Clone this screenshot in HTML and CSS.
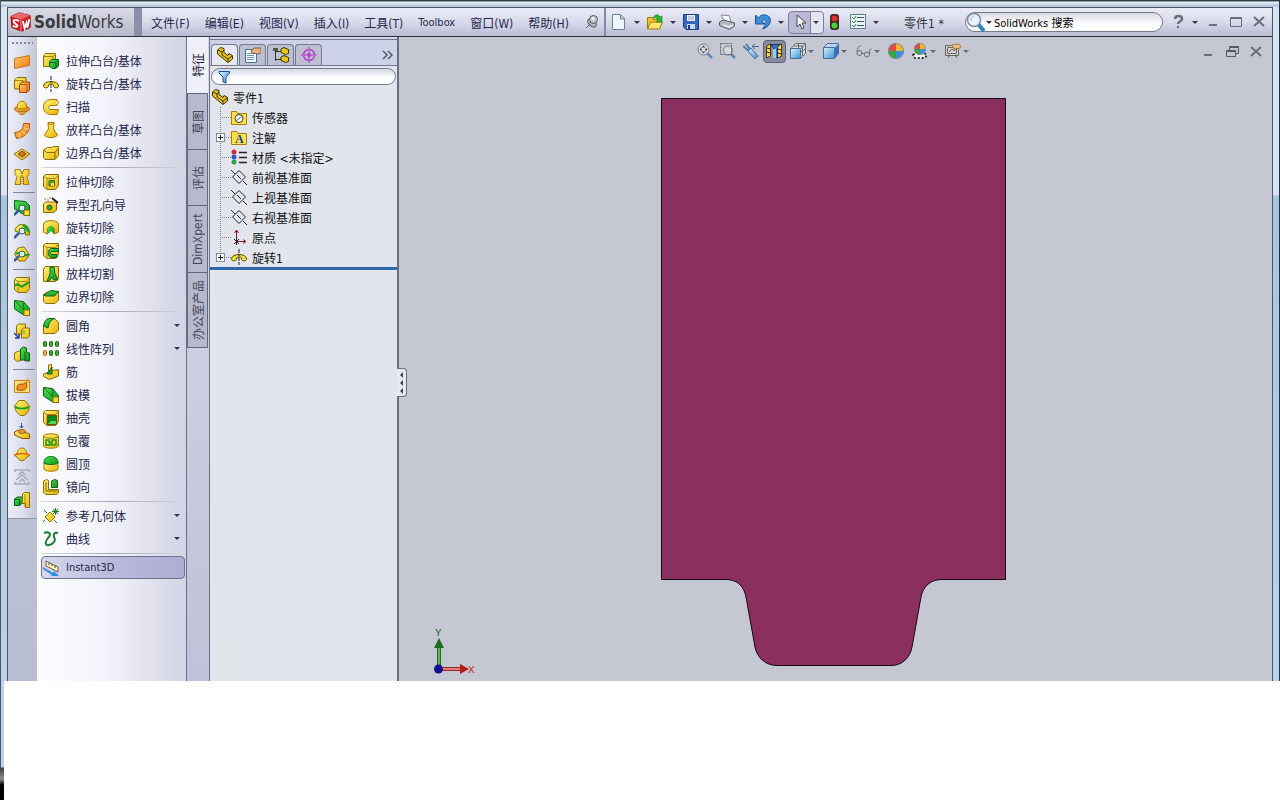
FILE: index.html
```html
<!DOCTYPE html>
<html lang="zh-CN">
<head>
    <meta charset="UTF-8">
    <meta name="viewport" content="width=device-width, initial-scale=1.0">
    <title>SolidWorks - 零件1</title>
    <link rel="stylesheet" href="styles.css">
</head>
<body>

<!-- icon set, 16 x 16 grid -->
<svg class="icon-set" aria-hidden="true">
    <linearGradient id="yel" x2="1" y2="1"><stop offset="0" stop-color="#fff27a"/><stop offset="1" stop-color="#e9b400"/></linearGradient>
    <linearGradient id="org" x2="1" y2="1"><stop offset="0" stop-color="#ffc870"/><stop offset="1" stop-color="#ef7a0c"/></linearGradient>
    <linearGradient id="grn" x2="1" y2="1"><stop offset="0" stop-color="#4be04b"/><stop offset="1" stop-color="#0c9420"/></linearGradient>
    <linearGradient id="blu" x2="1" y2="1"><stop offset="0" stop-color="#d8f2ff"/><stop offset="1" stop-color="#3f8fd2"/></linearGradient>

    <symbol id="cube" viewBox="0 0 16 16"><path d="M.5 2.500 2.500.5H15.500v11L12.500 15.500H4L.5 12.500z" fill="url(#yel)" stroke="#8d6c08"/><path d="M1 2.500l3 2h8.500L15 1.500M4 4.500v10.500" fill="none" stroke="#a8840c"/></symbol>

    <symbol id="plane" viewBox="0 0 16 16"><path d="M.5 4.500 15.500 1.500v10L.5 14.500z" fill="url(#org)" stroke="#c8761c"/></symbol>
    <symbol id="thicken" viewBox="0 0 16 16"><path d="M.5 3 3 .5h9v9L9 12H.5z" fill="url(#yel)" stroke="#8d6c08"/><path d="M.5 3.500H9V11" fill="none" stroke="#a8840c"/><path d="M5.500 7.500 8 5h7.500v8L13 15.500H5.500z" fill="url(#org)" stroke="#a04c04"/><path d="M6 7.500h7V15M13 7.500l2-2" fill="none" stroke="#b86008"/></symbol>
    <symbol id="spin" viewBox="0 0 16 16"><ellipse cx="8" cy="9" rx="7.500" ry="3" fill="url(#org)" stroke="#a8600a"/><path d="M3 8c0-9 10-9 10 0-2 1.500-8 1.500-10 0z" fill="url(#yel)" stroke="#a8780a"/><path d="M4 11c1 5 7 5 8 0-2 1-6 1-8 0z" fill="url(#org)" stroke="#a8780a"/></symbol>
    <symbol id="sweep-s" viewBox="0 0 16 16"><path d="M9.500.5h6c1 8-4 14-13 15l-2-6c5 0 9-3 9-9z" fill="url(#org)" stroke="#b05808"/><path d="M10 5l5 1M8 8l5 4M5 10l1 5" stroke="#ffe080"/></symbol>
    <symbol id="loft-s" viewBox="0 0 16 16"><path d="M0 8 8 3l8 5-8 6z" fill="url(#yel)" stroke="#8d6c08"/><path d="M4 8 8 5l4 3-4 3z" fill="#d9760a" stroke="#7d4404"/></symbol>
    <symbol id="zip" viewBox="0 0 16 16"><path d="M1 .5h5l2 4 2-4h5v5l-2 2 2 8H9.500V8h-3v7.500H1l2-8-2-2z" fill="url(#yel)" stroke="#a87808"/><path d="M8 4v12" stroke="#9a5c04" stroke-dasharray="1 1"/></symbol>
    <symbol id="mag" viewBox="0 0 16 16"><path d="M0 15l5-5" stroke="#355f9a" stroke-width="2.500"/><circle cx="8" cy="8" r="3" fill="#d5f3f0" stroke="#3c5c66"/></symbol>
    <symbol id="draft-an" viewBox="0 0 16 16"><path d="M.5.5l11 1 4 4v10h-4L.5 9z" fill="url(#grn)" stroke="#0a6018"/><path d="M10 10h5.500v5.500H10z" fill="#ffe340" stroke="#8d6c08"/><use href="#mag"/></symbol>
    <symbol id="under-an" viewBox="0 0 16 16"><path d="M1 8c1-9 14-9 14.500 1v3h-4V9c-2-3-4-2-5 1z" fill="url(#yel)" stroke="#6c7404"/><path d="M8 2c5-1 8 4 7.500 8l-3-2z" fill="#19a326"/><use href="#mag"/></symbol>
    <symbol id="thick-an" viewBox="0 0 16 16"><path d="M4 2l6-1 3 4 2.500 4-4.500 6H5L.5 8z" fill="url(#yel)" stroke="#8d6c08"/><path d="M2 8c3-4 7 5 13 0" stroke="#18a32a" stroke-width="2" fill="none"/><use href="#mag"/></symbol>
    <symbol id="split" viewBox="0 0 16 16"><use href="#cube"/><path d="M1 9c4-5 5 3 8 0 2-2 3-1 6-4" fill="none" stroke="#119a21" stroke-width="2"/></symbol>
    <symbol id="draft" viewBox="0 0 16 16"><path d="M.5.5l9 1 6 7v7h-5L.5 9z" fill="url(#grn)" stroke="#0a6018"/><path d="M1 1l9 9M9 2l1 8" stroke="#0a7818" fill="none"/><path d="M10 10h5.500v5.500H10z" fill="#ffdc30" stroke="#8d6c08"/></symbol>
    <symbol id="movecopy" viewBox="0 0 16 16"><path d="M2.500 3l2-2h7v8l-2 2h-7z" fill="url(#yel)" stroke="#8d6c08"/><path d="M7.500 7l2-2h6v8l-2 2h-6z" fill="url(#yel)" stroke="#8d6c08"/><path d="M8 7h3v4H8z" fill="#a6c626"/><path d="M0 10l5 5M5 11v4H1" fill="none" stroke="#203c9c" stroke-width="1.500"/></symbol>
    <symbol id="combine" viewBox="0 0 16 16"><path d="M.5 7l4-2 3 1v8l-4 1.500-3-2z" fill="url(#yel)" stroke="#8d6c08"/><path d="M6.500 3l3-2 3 1v4l3 1v8h-4v-1h-5z" fill="url(#grn)" stroke="#0a6018"/><path d="M11 6v9" stroke="#0a6018"/></symbol>
    <symbol id="freeform" viewBox="0 0 16 16"><path d="M.5 3.500h15v12H.5z" fill="#ffe07a" stroke="#c8841c"/><path d="M3 10c2-6 5 0 9-5l1 5c-3 5-6 3-10 3z" fill="#f08c20" stroke="#a85008"/><path d="M10 0l1 3 4-2-2 3 3 2h-4" fill="#f89a38"/></symbol>
    <symbol id="deform" viewBox="0 0 16 16"><path d="M5 .5h6l4.500 5.500-1 5-4 4.500H6L2 11 .5 6z" fill="url(#yel)" stroke="#8d7408"/><path d="M1 7c4 2 10 2 14 0" stroke="#18a32a" stroke-width="2" fill="none"/></symbol>
    <symbol id="indent" viewBox="0 0 16 16"><path d="M7.500 0v5M5.500 3l2 2 2-2" stroke="#2444b0" fill="none"/><path d="M.5 9l4-2 11 4v4.500H8L.5 12z" fill="url(#yel)" stroke="#8d5408"/><ellipse cx="8" cy="8.500" rx="3.500" ry="2" fill="#f19a2c" stroke="#9c5808"/></symbol>
    <symbol id="flex" viewBox="0 0 16 16"><path d="M3 8c1-8 9-8 10 0l3 1-3 2c-3 5-7 5-10 0L0 9z" fill="url(#yel)" stroke="#a0680a"/><path d="M0 9c5-2 11-2 16 0" fill="none" stroke="#e46808" stroke-width="1.500"/></symbol>
    <symbol id="wrap-off" viewBox="0 0 16 16"><path d="M1 3V1h14v2M1 13v2h14v-2M2 11l6-5 6 5M4 6l4-3 4 3M5 13l3-3 3 3" fill="none" stroke="#a7aab4" stroke-width="1.500"/></symbol>
    <symbol id="body" viewBox="0 0 16 16"><path d="M.5 7l3-2h5v6l-3 2.500h-5z" fill="url(#grn)" stroke="#0a6018"/><path d="M1 7.500h4.500V13" fill="none" stroke="#0a6018"/><path d="M8.500 2l2-1.500h5v15h-4v-4h-3z" fill="url(#yel)" stroke="#8d6c08"/><path d="M11 2v13" stroke="#a8840c"/></symbol>

    <symbol id="extrude" viewBox="0 0 16 16"><path d="M.5 3l2-2.500h10v11L10 13.500H.5z" fill="url(#yel)" stroke="#8d6c08"/><path d="M.5 3.500H10V13M10 3.500l2-2" fill="none" stroke="#a8840c"/><path d="M6.500 9l2-2.500h7V13L13 15.500H9L6.500 13z" fill="url(#grn)" stroke="#0a6018"/><path d="M7 9.500h6V15M13 9.500l2-2" fill="none" stroke="#0a6018"/></symbol>
    <symbol id="revolve" viewBox="0 0 16 16"><path d="M.5 10c0-6 15-6 15 0 0 2.500-5 2.500-5 0 0-2-1-2-2-2h-1c-1 0-2 0-2 2 0 2.500-5 2.500-5 0z" fill="#f3dc3a" stroke="#5c5004"/><path d="M8 0v4M8 5v2M8 8v4M8 13v3" stroke="#222"/></symbol>
    <symbol id="sweep" viewBox="0 0 16 16"><path d="M14 .5H8c-10 0-10 15 0 15h6l1.500-5H8c-3 0-3-4 0-4h6z" fill="url(#yel)" stroke="#a87808"/><path d="M13 1c3 0 3 5 0 5" fill="#fff0a0" stroke="#a87808"/></symbol>
    <symbol id="loft" viewBox="0 0 16 16"><path d="M5 .5h6L10.500 7l4 6c-2 3.500-11 3.500-13 0l4-6z" fill="url(#yel)" stroke="#a87808"/><path d="M5 1c1 2 5 2 6 0" fill="none" stroke="#a87808"/></symbol>
    <symbol id="boundary" viewBox="0 0 16 16"><path d="M.5 5l4-2.500h4l2-1h5v9L12 14.500H2l-1.500-2z" fill="url(#yel)" stroke="#8d6c08"/><path d="M1 5.500l3 2h8l3-4M12 7v7" fill="none" stroke="#8d6c08"/></symbol>
    <symbol id="cut" viewBox="0 0 16 16"><use href="#cube"/><path d="M6 6.500h5.500V12H6z" fill="#35b52e" stroke="#715404"/><path d="M8 9h3v3H8z" fill="#f4e25a"/></symbol>
    <symbol id="hole" viewBox="0 0 16 16"><path d="M.5 7l2-2h11v8L11 15.500H.5z" fill="url(#yel)" stroke="#8d6c08"/><circle cx="6.500" cy="10.500" r="2.500" fill="#2ba92b" stroke="#584404"/><path d="M9 1l6 5" stroke="#222" stroke-width="2"/><path d="M2 1v2M5 2v2M7 0v2" stroke="#e07018"/></symbol>
    <symbol id="rev-cut" viewBox="0 0 16 16"><path d="M.5 4c1-4.500 14-4.500 15 0v8l-4 2V9c-1-3-6-3-7 0v5l-4-2z" fill="url(#yel)" stroke="#a87808"/><path d="M5 14V9c1-4 5-4 6 0v5L8 11z" fill="url(#grn)"/></symbol>
    <symbol id="swp-cut" viewBox="0 0 16 16"><use href="#cube"/><path d="M15.500 5.500H9c-5 0-5 9 0 9h5v-3H9c-2 0-2-3 0-3h6.500z" fill="url(#grn)" stroke="#0a6018"/></symbol>
    <symbol id="loft-cut" viewBox="0 0 16 16"><path d="M.5 3l2-2.500h13v12l-3 3H.5z" fill="url(#yel)" stroke="#8d6c08"/><path d="M7 1h4l1 7 3 6h-4l-2-3-3 4H4l3-7z" fill="url(#grn)" stroke="#0a6018"/></symbol>
    <symbol id="bnd-cut" viewBox="0 0 16 16"><path d="M.5 6l3-3h12v8L12 14.500H3l-2.500-2z" fill="url(#yel)" stroke="#8d6c08"/><path d="M.5 6c4-1 5-4.500 8-4.500l7 1-4 4.500H3z" fill="url(#grn)" stroke="#0a6018"/></symbol>
    <symbol id="fillet" viewBox="0 0 16 16"><path d="M.5 7l5-6.500h6l4 4V12L12 15.500H.5z" fill="url(#yel)" stroke="#8d6c08"/><path d="M.5 8c1-5 3-7.500 6-7.500h5C7 3 6 5 5 10z" fill="url(#grn)" stroke="#0a6018"/></symbol>
    <symbol id="pattern" viewBox="0 0 16 16"><g fill="#35b52e" stroke="#245c10"><rect x=".5" y=".5" width="3" height="5" rx="1"/><rect x="6.500" y=".5" width="3" height="5" rx="1"/><rect x="12.500" y=".5" width="3" height="5" rx="1"/><rect x="6.500" y="9.500" width="3" height="5" rx="1"/><rect x="12.500" y="9.500" width="3" height="5" rx="1"/></g><rect x=".5" y="9.500" width="3" height="5" rx="1" fill="#ffb850" stroke="#a05808"/></symbol>
    <symbol id="rib" viewBox="0 0 16 16"><path d="M.5 10l5-2V1l3-.5v6l7-1V12l-9 3.500-6-3z" fill="url(#yel)" stroke="#8d6c08"/><path d="M4 10l5-7v7z" fill="url(#grn)" stroke="#0a6018"/></symbol>
    <symbol id="shell" viewBox="0 0 16 16"><use href="#cube"/><path d="M4.500 5.500h9v9h-9z" fill="#098a1c" stroke="#665004"/><path d="M5 14l3-3h5v3z" fill="#57d84f"/></symbol>
    <symbol id="wrap" viewBox="0 0 16 16"><path d="M.5 3c1-3 14-3 15 0v10c-1 3-14 3-15 0z" fill="url(#yel)" stroke="#a87808"/><path d="M.5 3c1 3 14 3 15 0" fill="none" stroke="#a87808"/><path d="M7 7H3v5h4V9H5M9 7h4v5H9z" fill="none" stroke="#139a22" stroke-width="1.500"/></symbol>
    <symbol id="dome" viewBox="0 0 16 16"><path d="M1 6v7c1 3 13 3 14 0V6z" fill="url(#yel)" stroke="#a87808"/><path d="M1 7c0-9 14-9 14 0-2 2-12 2-14 0z" fill="url(#grn)" stroke="#0a7a18"/></symbol>
    <symbol id="mirror" viewBox="0 0 16 16"><path d="M.5 2l3-1.500 2 1v9h10v3l-2 2H3l-2.500-2z" fill="url(#yel)" stroke="#8d6c08"/><path d="M8.500 2l3-1.500 3 1v7h-6z" fill="url(#grn)" stroke="#0a6018"/><path d="M3 3v9h11M11 3v5" fill="none" stroke="#6d6c08"/></symbol>
    <symbol id="refgeo" viewBox="0 0 16 16"><path d="M7 4l5 5-5 5-5-5z" fill="url(#yel)" stroke="#9c7c08"/><path d="M1 2l3 3M11 12l3 3M0 14l2-2M12.500 0v7M9 3.500h7M10 1l5 5M15 1l-5 5" stroke="#1c8424" fill="none"/></symbol>
    <symbol id="curve" viewBox="0 0 16 16"><path d="M1 2c5-2 8 1 4 5-4 5-2 8 1 7 5-1 7-5 5-8-1-3 1-5 4-4" fill="none" stroke="#15803c" stroke-width="2"/></symbol>
    <symbol id="instant" viewBox="0 0 16 16"><path d="M3 1l12 6v5L3 6z" fill="#fff3b8" stroke="#6c6440"/><path d="M6 3v2M9 4v2M12 6v2" stroke="#444"/><path d="M0 7l10 6 1-2 5 5H8l1-1-9-6z" fill="#2f8fe4"/></symbol>

    <symbol id="pin" viewBox="0 0 16 16"><path d="M2 14l4-4" stroke="#666"/><ellipse cx="8" cy="9" rx="5" ry="3" transform="rotate(40 8 9)" fill="#b4b4bc" stroke="#555"/><circle cx="9.500" cy="5.500" r="4" fill="#c6c6d0" stroke="#555"/><circle cx="9" cy="4.500" r="1.500" fill="#fff"/></symbol>
    <symbol id="new" viewBox="0 0 16 16"><path d="M1.500.5h8l4 4v11h-12z" fill="#eef7fb" stroke="#6b8298"/><path d="M9.500 1v4h4" fill="#bfd5e4" stroke="#6b8298"/></symbol>
    <symbol id="open" viewBox="0 0 16 16"><path d="M.5 3.500h5l1 2h5v9H.5z" fill="#f2c32c" stroke="#a8780a"/><path d="M.5 15l3-7h12l-3 7z" fill="#ffe36a" stroke="#a8780a"/><path d="M6 4c2-4 6-4 7-1l2-1v6h-6l2-2c-1-2-3-3-5-2z" fill="#2eb62c" stroke="#117a14" stroke-width=".6"/></symbol>
    <symbol id="save" viewBox="0 0 16 16"><path d="M.5.5h15v15H3L.5 13z" fill="#3567c4" stroke="#1b3c8c"/><path d="M4 1h8v6H4z" fill="#f2f5fb"/><path d="M5 3h6M5 5h6" stroke="#8fa0c0"/><path d="M4 10h8v5H4z" fill="#cfd6e4"/><path d="M5 11h2v4H5z" fill="#1b3c8c"/></symbol>
    <symbol id="print" viewBox="0 0 16 16"><path d="M2 1l8 .5L12 8H6z" fill="#fff" stroke="#889"/><path d="M.5 8l4-2 11 3v3l-5 3.500-10-4z" fill="#b4b8c2" stroke="#555a66"/><path d="M4 11l6 2 4-2" fill="none" stroke="#eee" stroke-width="1.500"/></symbol>
    <symbol id="undo" viewBox="0 0 16 16"><path d="M.5 1v9H10L6.500 7c4-3 7 1 1 8C18 12 18 0 8 1 6 1 5 2 3.500 4z" fill="#3c8edc" stroke="#1a4f9c"/></symbol>
    <symbol id="arrow" viewBox="0 0 16 16"><path d="M4 1v12l3-3 2 5 2-1-2-5h4z" fill="#fff" stroke="#444"/></symbol>
    <symbol id="traffic" viewBox="0 0 16 16"><rect x="3" y="0" width="9" height="16" rx="3" fill="#3b2a20"/><circle cx="7.500" cy="4.500" r="3" fill="#e23030"/><circle cx="7.500" cy="11.500" r="3" fill="#3ed13a"/></symbol>
    <symbol id="options" viewBox="0 0 16 16"><path d="M.5.5h15v14H.5z" fill="#e9f4f4" stroke="#5b8080"/><path d="M7 3.500h7M7 7.500h7M7 11.500h7" stroke="#456"/><path d="M2 3l2 2 2-3M2 7l2 2 2-3M2 11l2 2 2-3" fill="none" stroke="#21933a"/></symbol>
    <symbol id="search" viewBox="0 0 20 20"><path d="M12 12l6 7" stroke="#2f87b4" stroke-width="4"/><circle cx="8" cy="8" r="6.500" fill="#eaf3fa" stroke="#7b8ea6" stroke-width="1.500"/><path d="M5 9c0-3 1-4 3-5" fill="none" stroke="#9fb4c8"/></symbol>
    <symbol id="help" viewBox="0 0 16 16"><path d="M5 5c0-4 7-4 7 0 0 3-4 2-4 5" fill="none" stroke="#6c6e7a" stroke-width="2.500"/><path d="M7 12h2v2H7z" fill="#6c6e7a"/></symbol>
    <symbol id="min" viewBox="0 0 16 16"><path d="M4 11h8" stroke="#6c6e7a" stroke-width="2"/></symbol>
    <symbol id="max" viewBox="0 0 16 16"><path d="M2.500 3.500h11v9h-11zM3 4.500h10" fill="none" stroke="#6c6e7a"/></symbol>
    <symbol id="close" viewBox="0 0 16 16"><path d="M3 3l10 9M13 3L3 12" stroke="#6c6e7a" stroke-width="2"/></symbol>
    <symbol id="restore" viewBox="0 0 16 16"><path d="M5.500 6V2.500h9v7H11M6 3.500h8M2.500 6.500h9v6h-9zM3 7.500h8" fill="none" stroke="#555a68"/></symbol>

    <symbol id="zfit" viewBox="0 0 16 16"><path d="M10 10l5 5" stroke="#5d88b4" stroke-width="2.500"/><circle cx="6.500" cy="6.500" r="5.500" fill="#d7dbe2" stroke="#777c88"/><path d="M6.500 2.500l2 2h-4zM6.500 10.500l2-2h-4zM2.500 6.500l2-2v4zM10.500 6.500l-2-2v4z" fill="#444"/></symbol>
    <symbol id="zarea" viewBox="0 0 16 16"><path d="M11 11l4 4" stroke="#5d88b4" stroke-width="2.500"/><circle cx="8" cy="7.500" r="4.500" fill="#d7dbe2" stroke="#777c88"/><path d="M.5.5h11v11H.5z" fill="none" stroke="#666" stroke-dasharray="2 1"/></symbol>
    <symbol id="prev" viewBox="0 0 16 16"><path d="M0 3l6 5M3 1l4 5" stroke="#467fb0" stroke-width="2"/><path d="M5 8l3-3 7 8-3 3z" fill="url(#blu)" stroke="#44719c"/><path d="M16 3.500H9M12 1L9 3.500 12 6" fill="none" stroke="#3c6ca0"/></symbol>
    <symbol id="section" viewBox="0 0 16 16"><path d="M.5 3l4-2v12l-4 2zM11.500 3l4-2v12l-4 2z" fill="#ffd83a" stroke="#443800"/><path d="M4.500 1.500h9l-2 3v10h-4V5z" fill="#3478cc" stroke="#14356c"/><path d="M7 6h3v9H7z" fill="#9cc8f4"/><path d="M1 5l3 1M1 9l3 1M12 6l3 1M12 10l3 1" stroke="#222"/></symbol>
    <symbol id="orient" viewBox="0 0 16 16"><path d="M.5 6l5-5.500h10v10l-5 5H.5z" fill="#d9dce4" stroke="#666"/><path d="M.5 5.500h10v10H.5z" fill="url(#blu)" stroke="#44719c"/><path d="M10.500 6l5-5M12.500 3v10M4 3h9M8.500 1v4M11 9l4-3" stroke="#666"/></symbol>
    <symbol id="display" viewBox="0 0 16 16"><path d="M.5 4.500l4-4h11v10l-4 5H.5z" fill="#b8d4f0" stroke="#4a6c98"/><path d="M.5 4.500h11v11H.5z" fill="url(#blu)" stroke="#4a6c98"/><path d="M11.500 5l4-4v10l-4 4z" fill="#3e72b8"/></symbol>
    <symbol id="glasses" viewBox="0 0 16 16"><circle cx="3.500" cy="10" r="2.500" fill="none" stroke="#666b78"/><circle cx="11" cy="11.500" r="2.500" fill="none" stroke="#666b78"/><path d="M1 9c0-4 2-6 4-6M6 10l3 1M13.500 11c0-3 0-5 2-5" fill="none" stroke="#666b78"/></symbol>
    <symbol id="ball" viewBox="0 0 16 16"><path d="M8 8V0a8 8 0 0 1 8 8z" fill="#e8b83a"/><path d="M8 8h8a8 8 0 0 1-8 8z" fill="#3f8ee0"/><path d="M8 8v8a8 8 0 0 1-8-8z" fill="#34a744"/><path d="M8 8H0a8 8 0 0 1 8-8z" fill="#dd4b4b"/><circle cx="8" cy="8" r="7.500" fill="none" stroke="#888"/></symbol>
    <symbol id="scene" viewBox="0 0 16 16"><path d="M1 12l3-2h8l3 2-2 3H3z" fill="#fff" stroke="#333" stroke-dasharray="2 2" stroke-width="2"/><use href="#ball" x="2" y="0" width="12" height="12"/></symbol>
    <symbol id="settings" viewBox="0 0 16 16"><path d="M.5 2.500h13v10H.5zM2.500 4.500h9v6h-9z" fill="#d6d2cc" stroke="#666"/><path d="M4 9l3-3 2 2 2-3" fill="none" stroke="#555"/><path d="M7 2l6-1 3 2-1 2-6 1z" fill="#f2c189" stroke="#a87840"/><path d="M5 12l-2 3M10 12l2 3" stroke="#555"/></symbol>

    <symbol id="part" viewBox="0 0 16 16"><path d="M.5 3l3-2.500 3.500 1v4l4 3 1-2 3.500 2V12L11 15.500.5 7z" fill="#e6c31e" stroke="#3c3204"/><path d="M1 3l4 2v3l6 4 4-3M5 5l2-2M11 12v3" fill="none" stroke="#3c3204"/></symbol>
    <symbol id="props" viewBox="0 0 16 16"><path d="M.5 2.500h11v13H.5z" fill="#f6fbff" stroke="#46729c"/><path d="M2 6.500h7M2 8.500h7M2 10.500h7M2 12.500h7" stroke="#6a9ccc"/><path d="M6 4l3-3h7v5l-4 1-5-1z" fill="#e2b283" stroke="#865c34"/></symbol>
    <symbol id="config" viewBox="0 0 16 16"><path d="M2.500 1v13M2 4.500h6M2 12.500h6" fill="none" stroke="#333"/><path d="M0 1h5v3H0z" fill="#555"/><path d="M8 2l3-1.500 4.500 2v4l-3 1L8 5.500zM8 10l3-1.500 4.500 2v4l-3 1-4.500-2z" fill="#e9c41c" stroke="#3c3204"/></symbol>
    <symbol id="target" viewBox="0 0 16 16"><circle cx="8" cy="8" r="5.500" fill="none" stroke="#b244c4" stroke-width="1.500"/><path d="M8 0v16M0 8h16" stroke="#c25cd0" stroke-width="1.500"/><circle cx="8" cy="8" r="2" fill="#b244c4"/></symbol>
    <symbol id="funnel" viewBox="0 0 16 16"><path d="M3 2.500h10.500V4L10 8v6l-3-1V8L3 4z" fill="url(#blu)" stroke="#174f9c"/></symbol>
    <symbol id="folder" viewBox="0 0 16 16"><path d="M.5 2.500h5l1 2h9v11H.5z" fill="#ffe14a" stroke="#a88008"/></symbol>
    <symbol id="sensor" viewBox="0 0 16 16"><use href="#folder"/><circle cx="8" cy="9.500" r="4" fill="#fff" stroke="#333"/><path d="M6 11.500l4-4" stroke="#246"/></symbol>
    <symbol id="material" viewBox="0 0 16 16"><circle cx="3" cy="3" r="2.500" fill="#d82a3c"/><circle cx="3" cy="8" r="2.500" fill="#3454c8"/><circle cx="3" cy="13" r="2.500" fill="#32a044"/><path d="M8 3.500h8M8 8.500h8M8 13.500h8" stroke="#222" stroke-width="1.500"/></symbol>
    <symbol id="datum" viewBox="0 0 16 16"><path d="M8 1.500l6.500 6.500L8 14.500 1.500 8zM0 1l4 4M6 6l4 4M12 12l4 4" fill="none" stroke="#222"/></symbol>
    <symbol id="origin" viewBox="0 0 16 16"><path d="M5.500 11V2M3.500 4l2-3 2 3M5 12.500h9M12 10.500l3 2-3 2" fill="none" stroke="#8a1828"/><path d="M3 10l5 5M8 10l-5 5M5.500 9v7" stroke="#222"/></symbol>
    <symbol id="logo" viewBox="0 0 24 22"><path d="M1 5L10 1l12 3v13l-9 4L2 17z" fill="#d41c24" stroke="#8c1014"/><path d="M1 5l11 3 10-4L10 1z" fill="#f0696a"/><path d="M12 8v13" stroke="#f79a9a"/><path d="M10 10c-6-3-8 0-4 3 4 2 2 5-3 2M14 10l2 8 2-6 1 5 2-9" fill="none" stroke="#fff" stroke-width="2"/></symbol>
</svg>

<div class="window">
    <header class="titlebar">
        <div class="brand">
            <svg class="logo"><use href="#logo"/></svg>
            <span class="brand-name"><b>Solid</b>Works</span>
        </div>
        <nav class="menus">
            <button>文件(F)</button>
            <button>编辑(E)</button>
            <button>视图(V)</button>
            <button>插入(I)</button>
            <button>工具(T)</button>
            <button class="latin">Toolbox</button>
            <button>窗口(W)</button>
            <button>帮助(H)</button>
            <button aria-label="固定"><svg class="icon"><use href="#pin"/></svg></button>
        </nav>
        <div class="quick">
            <button class="drop" aria-label="新建"><svg class="icon"><use href="#new"/></svg><i class="caret"></i></button>
            <button class="drop" aria-label="打开"><svg class="icon"><use href="#open"/></svg><i class="caret"></i></button>
            <button class="drop" aria-label="保存"><svg class="icon"><use href="#save"/></svg><i class="caret"></i></button>
            <button class="drop" aria-label="打印"><svg class="icon"><use href="#print"/></svg><i class="caret"></i></button>
            <button class="drop" aria-label="撤销"><svg class="icon"><use href="#undo"/></svg><i class="caret"></i></button>
            <button class="drop picked" aria-label="选择"><svg class="icon"><use href="#arrow"/></svg><i class="caret"></i></button>
            <button aria-label="重建模型"><svg class="icon"><use href="#traffic"/></svg></button>
            <button class="drop" aria-label="选项"><svg class="icon"><use href="#options"/></svg><i class="caret"></i></button>
        </div>
        <span class="doc-name">零件1 *</span>
        <label class="search">
            <svg class="search-icon"><use href="#search"/></svg>
            <i class="caret"></i>
            <input type="text" value="SolidWorks 搜索" aria-label="搜索">
        </label>
        <div class="win-buttons">
            <button class="drop" aria-label="帮助"><svg class="icon"><use href="#help"/></svg><i class="caret"></i></button>
            <button aria-label="最小化"><svg class="icon"><use href="#min"/></svg></button>
            <button aria-label="最大化"><svg class="icon"><use href="#max"/></svg></button>
            <button aria-label="关闭"><svg class="icon"><use href="#close"/></svg></button>
        </div>
    </header>

    <div class="workspace">
        <div class="rail">
            <div class="rail-tools">
                <div class="grip"></div>
                <button aria-label="平面"><svg class="icon"><use href="#plane"/></svg></button>
                <button aria-label="加厚"><svg class="icon"><use href="#thicken"/></svg></button>
                <button aria-label="旋转曲面"><svg class="icon"><use href="#spin"/></svg></button>
                <button aria-label="扫描曲面"><svg class="icon"><use href="#sweep-s"/></svg></button>
                <button aria-label="放样曲面"><svg class="icon"><use href="#loft-s"/></svg></button>
                <button aria-label="缝合"><svg class="icon"><use href="#zip"/></svg></button>
                <hr>
                <button aria-label="拔模分析"><svg class="icon"><use href="#draft-an"/></svg></button>
                <button aria-label="底切分析"><svg class="icon"><use href="#under-an"/></svg></button>
                <button aria-label="厚度分析"><svg class="icon"><use href="#thick-an"/></svg></button>
                <hr>
                <button aria-label="分割"><svg class="icon"><use href="#split"/></svg></button>
                <button aria-label="拔模"><svg class="icon"><use href="#draft"/></svg></button>
                <button aria-label="移动/复制"><svg class="icon"><use href="#movecopy"/></svg></button>
                <button aria-label="组合"><svg class="icon"><use href="#combine"/></svg></button>
                <hr>
                <button aria-label="自由形"><svg class="icon"><use href="#freeform"/></svg></button>
                <button aria-label="变形"><svg class="icon"><use href="#deform"/></svg></button>
                <button aria-label="压凹"><svg class="icon"><use href="#indent"/></svg></button>
                <button aria-label="弯曲"><svg class="icon"><use href="#flex"/></svg></button>
                <button aria-label="包覆" disabled><svg class="icon"><use href="#wrap-off"/></svg></button>
                <button aria-label="实体"><svg class="icon"><use href="#body"/></svg></button>
            </div>
        </div>

        <div class="features">
            <button><svg class="icon"><use href="#extrude"/></svg>拉伸凸台/基体</button>
            <button><svg class="icon"><use href="#revolve"/></svg>旋转凸台/基体</button>
            <button><svg class="icon"><use href="#sweep"/></svg>扫描</button>
            <button><svg class="icon"><use href="#loft"/></svg>放样凸台/基体</button>
            <button><svg class="icon"><use href="#boundary"/></svg>边界凸台/基体</button>
            <hr>
            <button><svg class="icon"><use href="#cut"/></svg>拉伸切除</button>
            <button><svg class="icon"><use href="#hole"/></svg>异型孔向导</button>
            <button><svg class="icon"><use href="#rev-cut"/></svg>旋转切除</button>
            <button><svg class="icon"><use href="#swp-cut"/></svg>扫描切除</button>
            <button><svg class="icon"><use href="#loft-cut"/></svg>放样切割</button>
            <button><svg class="icon"><use href="#bnd-cut"/></svg>边界切除</button>
            <hr>
            <button><svg class="icon"><use href="#fillet"/></svg>圆角<i class="caret"></i></button>
            <button><svg class="icon"><use href="#pattern"/></svg>线性阵列<i class="caret"></i></button>
            <button><svg class="icon"><use href="#rib"/></svg>筋</button>
            <button><svg class="icon"><use href="#draft"/></svg>拔模</button>
            <button><svg class="icon"><use href="#shell"/></svg>抽壳</button>
            <button><svg class="icon"><use href="#wrap"/></svg>包覆</button>
            <button><svg class="icon"><use href="#dome"/></svg>圆顶</button>
            <button><svg class="icon"><use href="#mirror"/></svg>镜向</button>
            <hr>
            <button><svg class="icon"><use href="#refgeo"/></svg>参考几何体<i class="caret"></i></button>
            <button><svg class="icon"><use href="#curve"/></svg>曲线<i class="caret"></i></button>
            <hr>
            <button class="pressed latin" aria-pressed="true"><svg class="icon"><use href="#instant"/></svg>Instant3D</button>
        </div>

        <div class="side-tabs" role="tablist">
            <button class="active" role="tab" aria-selected="true">特征</button>
            <button role="tab">草图</button>
            <button role="tab">评估</button>
            <button role="tab" class="long">DimXpert</button>
            <button role="tab" class="longer">办公室产品</button>
        </div>

        <aside class="tree-panel">
            <div class="tree-tabs" role="tablist">
                <button class="active" role="tab" aria-label="设计树"><svg class="icon"><use href="#part"/></svg></button>
                <button role="tab" aria-label="属性"><svg class="icon"><use href="#props"/></svg></button>
                <button role="tab" aria-label="配置"><svg class="icon"><use href="#config"/></svg></button>
                <button role="tab" aria-label="尺寸专家"><svg class="icon"><use href="#target"/></svg></button>
                <button class="more" aria-label="更多"><svg class="icon" viewBox="0 0 16 16"><path d="M4 4l4 4-4 4M9 4l4 4-4 4" fill="none" stroke="#555a6c" stroke-width="1.500"/></svg></button>
            </div>
            <label class="filter">
                <svg class="icon"><use href="#funnel"/></svg>
                <input type="text" aria-label="过滤">
            </label>
            <div class="tree-root"><svg class="icon"><use href="#part"/></svg>零件1</div>
            <ul class="tree">
                <li><span class="branch"></span><svg class="icon"><use href="#sensor"/></svg>传感器</li>
                <li><span class="branch"><button class="expand" aria-label="展开"></button></span><svg class="icon" viewBox="0 0 16 16"><use href="#folder"/><text x="4" y="14" class="note-letter">A</text></svg>注解</li>
                <li><span class="branch"></span><svg class="icon"><use href="#material"/></svg>材质 &lt;未指定&gt;</li>
                <li><span class="branch"></span><svg class="icon"><use href="#datum"/></svg>前视基准面</li>
                <li><span class="branch"></span><svg class="icon"><use href="#datum"/></svg>上视基准面</li>
                <li><span class="branch"></span><svg class="icon"><use href="#datum"/></svg>右视基准面</li>
                <li><span class="branch"></span><svg class="icon"><use href="#origin"/></svg>原点</li>
                <li><span class="branch last"><button class="expand" aria-label="展开"></button></span><svg class="icon"><use href="#revolve"/></svg>旋转1</li>
            </ul>
            <button class="splitter" aria-label="折叠面板"><i></i><i></i><i></i></button>
        </aside>

        <main class="canvas">
            <div class="canvas-top">
                <div class="hud">
                    <button aria-label="整屏显示全图"><svg class="icon"><use href="#zfit"/></svg></button>
                    <button aria-label="局部放大"><svg class="icon"><use href="#zarea"/></svg></button>
                    <button aria-label="上一视图"><svg class="icon"><use href="#prev"/></svg></button>
                    <button class="on" aria-label="剖面视图"><svg class="icon"><use href="#section"/></svg></button>
                    <button class="drop" aria-label="视图定向"><svg class="icon"><use href="#orient"/></svg><i class="caret"></i></button>
                    <button class="drop" aria-label="显示样式"><svg class="icon"><use href="#display"/></svg><i class="caret"></i></button>
                    <button class="drop" aria-label="隐藏/显示"><svg class="icon"><use href="#glasses"/></svg><i class="caret"></i></button>
                    <button aria-label="编辑外观"><svg class="icon"><use href="#ball"/></svg></button>
                    <button class="drop" aria-label="应用布景"><svg class="icon"><use href="#scene"/></svg><i class="caret"></i></button>
                    <button class="drop" aria-label="视图设定"><svg class="icon"><use href="#settings"/></svg><i class="caret"></i></button>
                </div>
                <div class="doc-buttons">
                    <button aria-label="最小化"><svg class="icon"><use href="#min"/></svg></button>
                    <button aria-label="还原"><svg class="icon"><use href="#restore"/></svg></button>
                    <button aria-label="关闭"><svg class="icon"><use href="#close"/></svg></button>
                </div>
            </div>

            <svg class="model" viewBox="0 0 345 568">
                <path d="M.5.500H344.500V481.500H281C270 481.500 262 488 260 499L251 549C249 560 241 567.500 230 567.500H116C105 567.500 96 560 94 549L85 499C83 488 76 481.500 65 481.500H.5Z" fill="#8a2f60" stroke="#14060e"/>
            </svg>

            <svg class="triad" viewBox="0 0 44 50">
                <path d="M5 40V18" stroke="#1c6c24" stroke-width="4"/><path d="M5 40V18" stroke="#62b45c" stroke-width="2"/>
                <path d="M5 11l5 10H0z" fill="#1c6c24"/>
                <path d="M6 42h20" stroke="#9c2424" stroke-width="4"/><path d="M6 42h20" stroke="#e27c7c" stroke-width="2"/>
                <path d="M35 42l-9-5v10z" fill="#b41c1c"/>
                <circle cx="4.500" cy="42" r="4.500" fill="#10108c"/>
                <text x="1" y="9" fill="#1c6c24">Y</text>
                <text x="34" y="46" fill="#d01c24">X</text>
            </svg>
        </main>
    </div>
</div>

<div class="below"><div class="paper"></div></div>

</body>
</html>
```

FILE: styles.css
```css
* {
    box-sizing: border-box;
}

body {
    margin: 0;
    min-height: 100vh;
    display: flex;
    flex-direction: column;
    font-family: "DejaVu Sans Condensed", "Noto Sans CJK SC", sans-serif;
    font-size: 12px;
    color: #26264e;
    background-color: #fff;
}

button {
    display: flex;
    align-items: center;
    justify-content: center;
    margin: 0;
    padding: 0;
    border: none;
    background: none;
    font: inherit;
    color: inherit;
    white-space: nowrap;
}

input {
    flex: 1;
    min-width: 0;
    padding: 0;
    border: none;
    outline: none;
    background: none;
    font: inherit;
}

.icon-set {
    position: absolute;
    width: 0;
    height: 0;
}

.icon {
    width: 16px;
    height: 16px;
    flex: none;
}

.caret {
    flex: none;
    border: 3px solid transparent;
    border-top-color: #33364c;
    border-bottom: none;
}

.latin {
    font-size: 11px;
}

/* window frame */
.window {
    flex: 1;
    display: flex;
    flex-direction: column;
    padding: 7px 6px 0 6px;
    border-left: 1px solid #46566a;
    border-right: 1px solid #0e3a58;
    background: linear-gradient(#333b4a 1px, #f0f5fa 2px, #bccbdc 5px, #b9c9dc 7px, transparent 7px),
                linear-gradient(#dbe4ee 195px, #a9c4dd 196px, #bcd2e6);
}

.titlebar {
    display: flex;
    align-items: stretch;
    height: 30px;
    border: 1px solid #4c5468;
    border-bottom-color: #30323e;
    background: linear-gradient(#eaebf6, #d9dbeb 50%, #b9bbd3);
}

.brand {
    display: flex;
    align-items: center;
    gap: 2px;
    width: 134px;
    padding-left: 2px;
    border-right: 8px solid #8b8daa;
    background: linear-gradient(#d9dae6, #b7b8c9);
}

.logo {
    width: 22px;
    height: 22px;
}

.brand-name {
    font-size: 17px;
    color: #3b3b42;
}

.menus {
    display: flex;
    align-items: center;
    gap: 15px;
    padding: 0 4px 0 9px;
    border-right: 2px solid #8789a2;
}

.quick {
    display: flex;
    align-items: center;
    padding-left: 2px;
}

.quick button {
    width: 23px;
}

.quick .drop {
    width: 36px;
    gap: 7px;
}

.quick .picked {
    gap: 4px;
    height: 23px;
    border: 1px solid #7c7e98;
    border-radius: 4px;
    background: linear-gradient(90deg, #b9b9d6 21px, #7c7e98 21px, #7c7e98 22px, #e4e5f0 22px);
}

.doc-name {
    margin: auto;
    color: #33343c;
}

.search {
    display: flex;
    align-items: center;
    width: 198px;
    height: 20px;
    margin: 4px 7px 0 0;
    border: 1px solid #74798c;
    border-radius: 10px;
    background: linear-gradient(#d9dae2, #fff 60%);
}

.search-icon {
    width: 20px;
    height: 20px;
    flex: none;
}

.search input {
    font-size: 11px;
    color: #000;
    padding-left: 2px;
}

.win-buttons {
    display: flex;
    align-items: center;
    gap: 7px;
    padding-right: 5px;
}

.win-buttons .drop {
    gap: 6px;
}

.workspace {
    flex: 1;
    display: flex;
    border-left: 1px solid #4c5468;
    border-right: 1px solid #4c5468;
}

/* left icon strip */
.rail {
    width: 29px;
    background: linear-gradient(#c6c9dc, #b9bdd2);
}

.rail-tools {
    display: flex;
    flex-direction: column;
    padding: 4px 1px 7px 0;
    border-bottom: 1px solid #9194aa;
    background: linear-gradient(90deg, #eceef7, #dcdfec 50%, #c3c6da);
}

.rail-tools button {
    height: 23px;
}

.grip {
    height: 9px;
    margin: 0 3px;
    background: radial-gradient(circle, #8588a4 1px, transparent 1px) 0 0 / 4px 4px repeat-x;
}

.rail-tools hr {
    width: 22px;
    height: 1px;
    margin: 4px 0 3px 5px;
    border: none;
    background-color: #80849c;
}

/* feature list */
.features {
    width: 149px;
    padding: 12px 1px 12px 4px;
    background: linear-gradient(90deg, #fdfdff, #f3f4fa 45%, #d3d4e4);
}

.features button {
    justify-content: flex-start;
    width: 100%;
    height: 23px;
    padding: 0 5px 0 2px;
}

.features .icon {
    margin-right: 7px;
}

.features .caret {
    margin-left: auto;
}

.features hr {
    height: 1px;
    margin: 3px 0 2px 0;
    border: none;
    background: linear-gradient(90deg, #d6d7e0, #a5a7ba 50%, #d6d7e0);
}

.features .pressed {
    padding-left: 1px;
    border: 1px solid #6f7190;
    border-radius: 4px;
    background: linear-gradient(90deg, #d6d7ee, #b9b9dc 50%, #adadd2);
}

/* vertical tabs */
.side-tabs {
    width: 23px;
    border-left: 1px solid #6d7088;
    background: linear-gradient(#d9daea, #bfc2d8);
}

.side-tabs button {
    writing-mode: vertical-rl;
    text-orientation: sideways;
    transform: rotate(180deg);
    width: 21px;
    height: 56px;
    border: 1px solid #62667e;
    border-top: none;
    background-color: #b7b9cd;
    color: #44465a;
}

.side-tabs .active {
    border: none;
    background-color: #eff0f8;
    color: #22243a;
}

.side-tabs .long {
    height: 67px;
}

.side-tabs .longer {
    height: 76px;
    border-top: 1px solid #62667e;
}

/* design tree */
.tree-panel {
    position: relative;
    width: 190px;
    border-left: 1px solid #6d7088;
    border-right: 2px solid #6b6e82;
    background-color: #e2e5ec;
    color: #111;
}

.tree-tabs {
    display: flex;
    align-items: flex-end;
    gap: 1px;
    height: 29px;
    padding-left: 1px;
    border-bottom: 1px solid #74788e;
    background: linear-gradient(#d3d7e8 2px, #74788e 2px, #74788e 3px, #cdd2e8 3px);
}

.tree-tabs button {
    width: 27px;
    height: 21px;
    border: 1px solid #74788e;
    border-bottom: none;
    border-radius: 4px 4px 0 0;
    background-color: #bcc0d2;
}

.tree-tabs .active {
    background-color: #e6e9f0;
}

.tree-tabs .more {
    width: 20px;
    margin-left: auto;
    border: none;
    background: none;
}

.filter {
    display: flex;
    align-items: center;
    gap: 4px;
    height: 17px;
    margin: 2px 1px;
    padding: 0 8px 0 4px;
    border: 1px solid #74798c;
    border-radius: 9px;
    background: linear-gradient(#d5d9e4, #fff 60%);
}

.tree-root {
    display: flex;
    align-items: center;
    gap: 5px;
    height: 20px;
    padding-left: 2px;
}

.tree {
    margin: 0;
    padding: 0;
    list-style: none;
    border-bottom: 3px solid #2f68ac;
}

.tree li {
    display: flex;
    align-items: center;
    height: 20px;
}

.tree .icon {
    margin-right: 5px;
}

.branch {
    display: flex;
    align-items: center;
    width: 21px;
    height: 20px;
    padding-left: 6px;
    background: repeating-linear-gradient(#888 0 1px, transparent 1px 2px) 10px 0 / 1px 20px no-repeat,
                repeating-linear-gradient(90deg, #888 0 1px, transparent 1px 2px) 10px 10px / 11px 1px no-repeat;
}

.branch.last {
    background-size: 1px 10px, 11px 1px;
}

.expand {
    width: 9px;
    height: 9px;
    border: 1px solid #848a9c;
    background: linear-gradient(#222, #222) center / 5px 1px no-repeat,
                linear-gradient(#222, #222) center / 1px 5px no-repeat, #fff;
}

.splitter {
    position: absolute;
    top: 331px;
    right: -10px;
    z-index: 1;
    flex-direction: column;
    gap: 2px;
    width: 10px;
    height: 29px;
    border: 1px solid #6b6e82;
    border-left: none;
    border-radius: 0 4px 4px 0;
    background-color: #e6e8f2;
}

.splitter i {
    border: 3px solid transparent;
    border-right-color: #44475c;
    border-left: none;
}

/* graphics area */
.canvas {
    position: relative;
    flex: 1;
    display: flex;
    flex-direction: column;
    align-items: center;
    padding-right: 4px;
    background-color: #c5c8d2;
}

.canvas-top {
    display: grid;
    grid-template-columns: 1fr auto 1fr;
    align-items: center;
    width: 100%;
    height: 28px;
}

.hud {
    grid-column: 2;
    display: flex;
}

.hud button {
    width: 23px;
    height: 23px;
}

.hud .drop {
    width: 33px;
    gap: 2px;
}

.hud .caret {
    border-top-color: #666a7a;
}

.hud .on {
    border: 1px solid #5c5f70;
    border-radius: 4px;
    background-color: #888c9e;
}

.doc-buttons {
    display: flex;
    gap: 8px;
    justify-content: flex-end;
    padding: 2px 4px 0 0;
}

.model {
    width: 345px;
    height: 568px;
    margin-top: 33px;
}

.triad {
    position: absolute;
    left: 35px;
    bottom: 4px;
    width: 44px;
    height: 50px;
}

.triad text {
    font-family: "Liberation Mono", monospace;
    font-size: 11px;
}

.note-letter {
    font-family: "Liberation Serif", serif;
    font-size: 12px;
    font-weight: bold;
    fill: #1c3a8c;
}

/* area under the window */
.below {
    height: 119px;
    padding-left: 4px;
    background: linear-gradient(transparent 86px, #3c4048 87px, #8c8c8c 98px, #000 104px),
                linear-gradient(90deg, #46566a 1px, #bcd2e6 1px);
}

.paper {
    height: 100%;
    background-color: #fff;
}
```
